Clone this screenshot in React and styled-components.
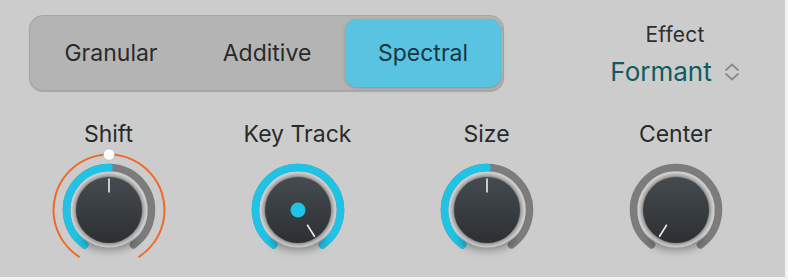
import React from 'react';
import styled, { createGlobalStyle } from 'styled-components';

const GlobalStyle = createGlobalStyle`
  body {
    margin: 0;
    background: #f4f4f4;
    font-family: Inter, "Noto Sans", "Liberation Sans", sans-serif;
  }
`;

const Panel = styled.div`
  width: 785px;
  height: 277px;
  background: #cccccc;
  display: flex;
  flex-direction: column;
  padding-top: 15px;
  box-sizing: border-box;
  overflow: hidden;
`;

const TopRow = styled.div`
  display: flex;
  align-items: flex-start;
  padding-left: 29px;
`;

const Segmented = styled.div`
  width: 475px;
  height: 76px;
  box-sizing: border-box;
  display: flex;
  padding: 3px 2px 3px 3px;
  border-radius: 14px;
  background: #b4b4b4;
  border: 1px solid #a4a4a4;
  box-shadow: 0 1px 1px rgba(0, 0, 0, 0.18);
`;

const Segment = styled.div`
  flex: 1;
  display: flex;
  align-items: center;
  justify-content: center;
  border-radius: 12px;
  font-size: 23px;
  color: ${p => (p.$active ? '#1b3641' : '#2a2a2a')};
  background: ${p => (p.$active ? '#58c4e2' : 'transparent')};
  box-shadow: ${p => (p.$active ? '0 1px 3px rgba(0,0,0,0.22)' : 'none')};
`;

const EffectBlock = styled.div`
  width: 160px;
  margin-left: 91px;
  margin-top: 8px;
  display: flex;
  flex-direction: column;
  align-items: center;
`;

const EffectTitle = styled.div`
  font-size: 21px;
  line-height: 24px;
  color: #2e2e2e;
  letter-spacing: 0.2px;
`;

const EffectValue = styled.div`
  margin-top: 10px;
  display: flex;
  align-items: center;
  gap: 12px;
  font-size: 26px;
  line-height: 30px;
  color: #0f5b63;
`;

const KnobRow = styled.div`
  display: flex;
  padding-left: 14px;
  margin-top: 30px;
`;

const KnobColumn = styled.div`
  width: 189px;
  display: flex;
  flex-direction: column;
  align-items: center;
`;

const KnobLabel = styled.div`
  font-size: 23px;
  line-height: 26px;
  color: #2a2a2a;
`;

const KnobSvg = styled.svg`
  margin-top: 3px;
  display: block;
  overflow: visible;
`;

const C = 60;
const START = -145;
const END = 145;

const pt = (deg, r) => {
  const a = (deg * Math.PI) / 180;
  return [C + r * Math.sin(a), C - r * Math.cos(a)];
};

const arc = (a1, a2, r) => {
  const [x1, y1] = pt(a1, r);
  const [x2, y2] = pt(a2, r);
  const large = a2 - a1 > 180 ? 1 : 0;
  return `M${x1} ${y1} A${r} ${r} 0 ${large} 1 ${x2} ${y2}`;
};

const Chevrons = () => (
  <svg width="16" height="18" viewBox="0 0 16 18">
    <path d="M2 7 L8 1.5 L14 7" fill="none" stroke="#8a8a8a" strokeWidth="1.7" strokeLinecap="round" strokeLinejoin="round" />
    <path d="M2 11 L8 16.5 L14 11" fill="none" stroke="#8a8a8a" strokeWidth="1.7" strokeLinecap="round" strokeLinejoin="round" />
  </svg>
);

const Knob = ({ id, value, blueTo, range, dot }) => {
  const [ix1, iy1] = pt(value, 18);
  const [ix2, iy2] = pt(value, 31);
  return (
    <KnobSvg width="120" height="120" viewBox="0 0 120 120">
      <defs>
        <radialGradient id={`bezel-${id}`} cx="0.5" cy="0.5" r="0.5">
          <stop offset="0.84" stopColor="#5d6163" />
          <stop offset="0.92" stopColor="#a9a9a9" />
          <stop offset="1" stopColor="#d0d0d0" />
        </radialGradient>
        <linearGradient id={`cap-${id}`} x1="0" y1="0" x2="0" y2="1">
          <stop offset="0" stopColor="#464b4f" />
          <stop offset="1" stopColor="#2c3033" />
        </linearGradient>
        <filter id={`blur-${id}`} x="-50%" y="-50%" width="200%" height="200%">
          <feGaussianBlur stdDeviation="4" />
        </filter>
      </defs>
      {range && (
        <path d={arc(-148, 148, 55.5)} fill="none" stroke="#ee6a2c" strokeWidth="2" />
      )}
      <path d={arc(START, END, 42.5)} fill="none" stroke="#7c7c7c" strokeWidth="7.5" strokeLinecap="round" />
      {blueTo !== undefined && (
        <path d={arc(START, blueTo, 42.5)} fill="none" stroke="#1fc3e5" strokeWidth="7.5" strokeLinecap="round" />
      )}
      <ellipse cx={C} cy={C + 30} rx="26" ry="10" fill="rgba(0,0,0,0.35)" filter={`url(#blur-${id})`} />
      <circle cx={C} cy={C} r="37.5" fill={`url(#bezel-${id})`} />
      <circle cx={C} cy={C} r="33" fill={`url(#cap-${id})`} />
      <line x1={ix1} y1={iy1} x2={ix2} y2={iy2} stroke="#ececec" strokeWidth="1.6" strokeLinecap="round" />
      {dot && <circle cx={C} cy={C} r="7.5" fill="#1fc3e5" />}
      {range && (
        <circle cx={C} cy={C - 55.5} r="5.5" fill="#ffffff" stroke="rgba(0,0,0,0.15)" strokeWidth="0.6" />
      )}
    </KnobSvg>
  );
};

const knobs = [
  { id: 'shift', label: 'Shift', value: 0, blueTo: 0, range: true },
  { id: 'key', label: 'Key Track', value: 148, blueTo: END, dot: true },
  { id: 'size', label: 'Size', value: 0, blueTo: 0 },
  { id: 'center', label: 'Center', value: -148 },
];

export default function App() {
  return (
    <>
      <GlobalStyle />
      <Panel>
        <TopRow>
          <Segmented>
            <Segment>Granular</Segment>
            <Segment>Additive</Segment>
            <Segment $active>Spectral</Segment>
          </Segmented>
          <EffectBlock>
            <EffectTitle>Effect</EffectTitle>
            <EffectValue>
              Formant
              <Chevrons />
            </EffectValue>
          </EffectBlock>
        </TopRow>
        <KnobRow>
          {knobs.map(k => (
            <KnobColumn key={k.id}>
              <KnobLabel>{k.label}</KnobLabel>
              <Knob {...k} />
            </KnobColumn>
          ))}
        </KnobRow>
      </Panel>
    </>
  );
}
